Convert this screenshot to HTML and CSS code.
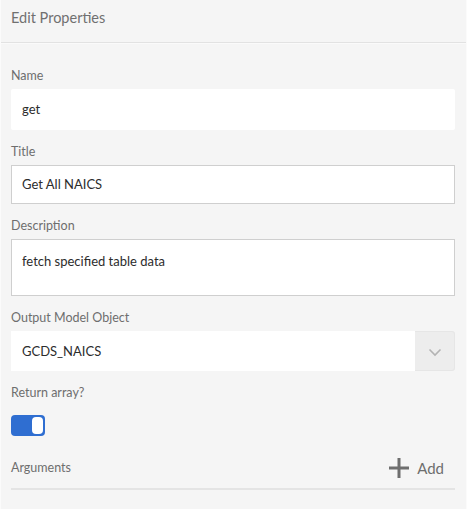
FILE: index.html
```html
<!DOCTYPE html>
<html>
<head>
<meta charset="utf-8">
<link rel="stylesheet" href="styles.css">
</head>
<body>
<div class="panel">
  <div class="header">Edit Properties</div>
  <div class="content">
    <div class="field first">
      <div class="label">Name</div>
      <div class="input plain name">get</div>
    </div>
    <div class="field">
      <div class="label">Title</div>
      <div class="input bordered title">Get All NAICS</div>
    </div>
    <div class="field">
      <div class="label">Description</div>
      <div class="input bordered textarea">fetch specified table data</div>
    </div>
    <div class="field">
      <div class="label">Output Model Object</div>
      <div class="select">
        <div class="select-value">GCDS_NAICS</div>
        <div class="select-btn">
          <svg width="14" height="9" viewBox="0 0 14 9"><path d="M1.5 1.5 L7 7 L12.5 1.5" fill="none" stroke="#b3b3b3" stroke-width="1.6"/></svg>
        </div>
      </div>
    </div>
    <div class="field">
      <div class="label">Return array?</div>
      <div class="toggle"><div class="knob"></div></div>
    </div>
    <div class="args">
      <div class="label args-label">Arguments</div>
      <div class="add">
        <svg width="20" height="20" viewBox="0 0 20 20"><path d="M10 0 V20 M0 10 H20" stroke="#6e6e6e" stroke-width="3"/></svg>
        <span>Add</span>
      </div>
    </div>
  </div>
</div>
</body>
</html>
```
FILE: styles.css
```css
html, body {
  margin: 0;
  padding: 0;
  background: #f5f5f5;
}
body {
  font-family: Lato, "Open Sans", sans-serif;
  width: 467px;
  height: 509px;
  overflow: hidden;
}
.panel {
  height: 509px;
  border-left: 1px solid #fbfbfb;
  border-right: 1px solid #fbfbfb;
  box-sizing: border-box;
}
.header {
  height: 43px;
  box-sizing: border-box;
  padding: 9px 0 0 10px;
  font-size: 14.5px;
  color: #707070;
  border-bottom: 1px solid #e2e2e2;
  box-shadow: 0 1px 0 #fafafa;
}
.content {
  padding: 0 11px 0 10px;
}
.field {
  margin-top: 14px;
}
.field.first {
  margin-top: 25px;
}
.label {
  font-size: 12.5px;
  line-height: 16px;
  height: 16px;
  color: #6e6e6e;
  margin-bottom: 5px;
}
.input {
  box-sizing: border-box;
  background: #fff;
  font-size: 13px;
  color: #2c2c2c;
  padding-left: 11px;
}
.input.plain {
  height: 41px;
  line-height: 41px;
  border-radius: 2px;
}
.input.bordered {
  border: 1px solid #cfcfcf;
  padding-left: 10px;
}
.input.title {
  height: 39px;
  line-height: 37px;
}
.input.textarea {
  height: 57px;
  line-height: 16px;
  padding-top: 13px;
}
.select {
  display: flex;
  height: 40px;
}
.select-value {
  flex: 1;
  background: #fff;
  font-size: 13px;
  color: #2c2c2c;
  line-height: 40px;
  padding-left: 11px;
}
.select-btn {
  width: 40px;
  box-sizing: border-box;
  background: #ededed;
  border: 1px solid #e6e6e6;
  border-left: none;
  border-radius: 0 3px 3px 0;
  display: flex;
  align-items: center;
  justify-content: center;
  padding-top: 2px;
}
.toggle {
  margin-top: 14px;
  width: 34px;
  height: 21px;
  box-sizing: border-box;
  background: #2f6ed1;
  border-radius: 4px;
  padding: 2px;
  display: flex;
  justify-content: flex-end;
}
.knob {
  width: 11px;
  height: 17px;
  background: #fff;
  border-radius: 4px;
}
.args {
  margin-top: 22px;
  display: flex;
  align-items: center;
  justify-content: space-between;
  height: 20px;
  padding-bottom: 10px;
  border-bottom: 2px solid #e4e4e4;
}
.args-label {
  margin-bottom: 0;
}
.add {
  display: flex;
  align-items: center;
  margin-right: 11px;
  color: #6e6e6e;
  font-size: 15px;
}
.add svg {
  margin-right: 8px;
}
```
